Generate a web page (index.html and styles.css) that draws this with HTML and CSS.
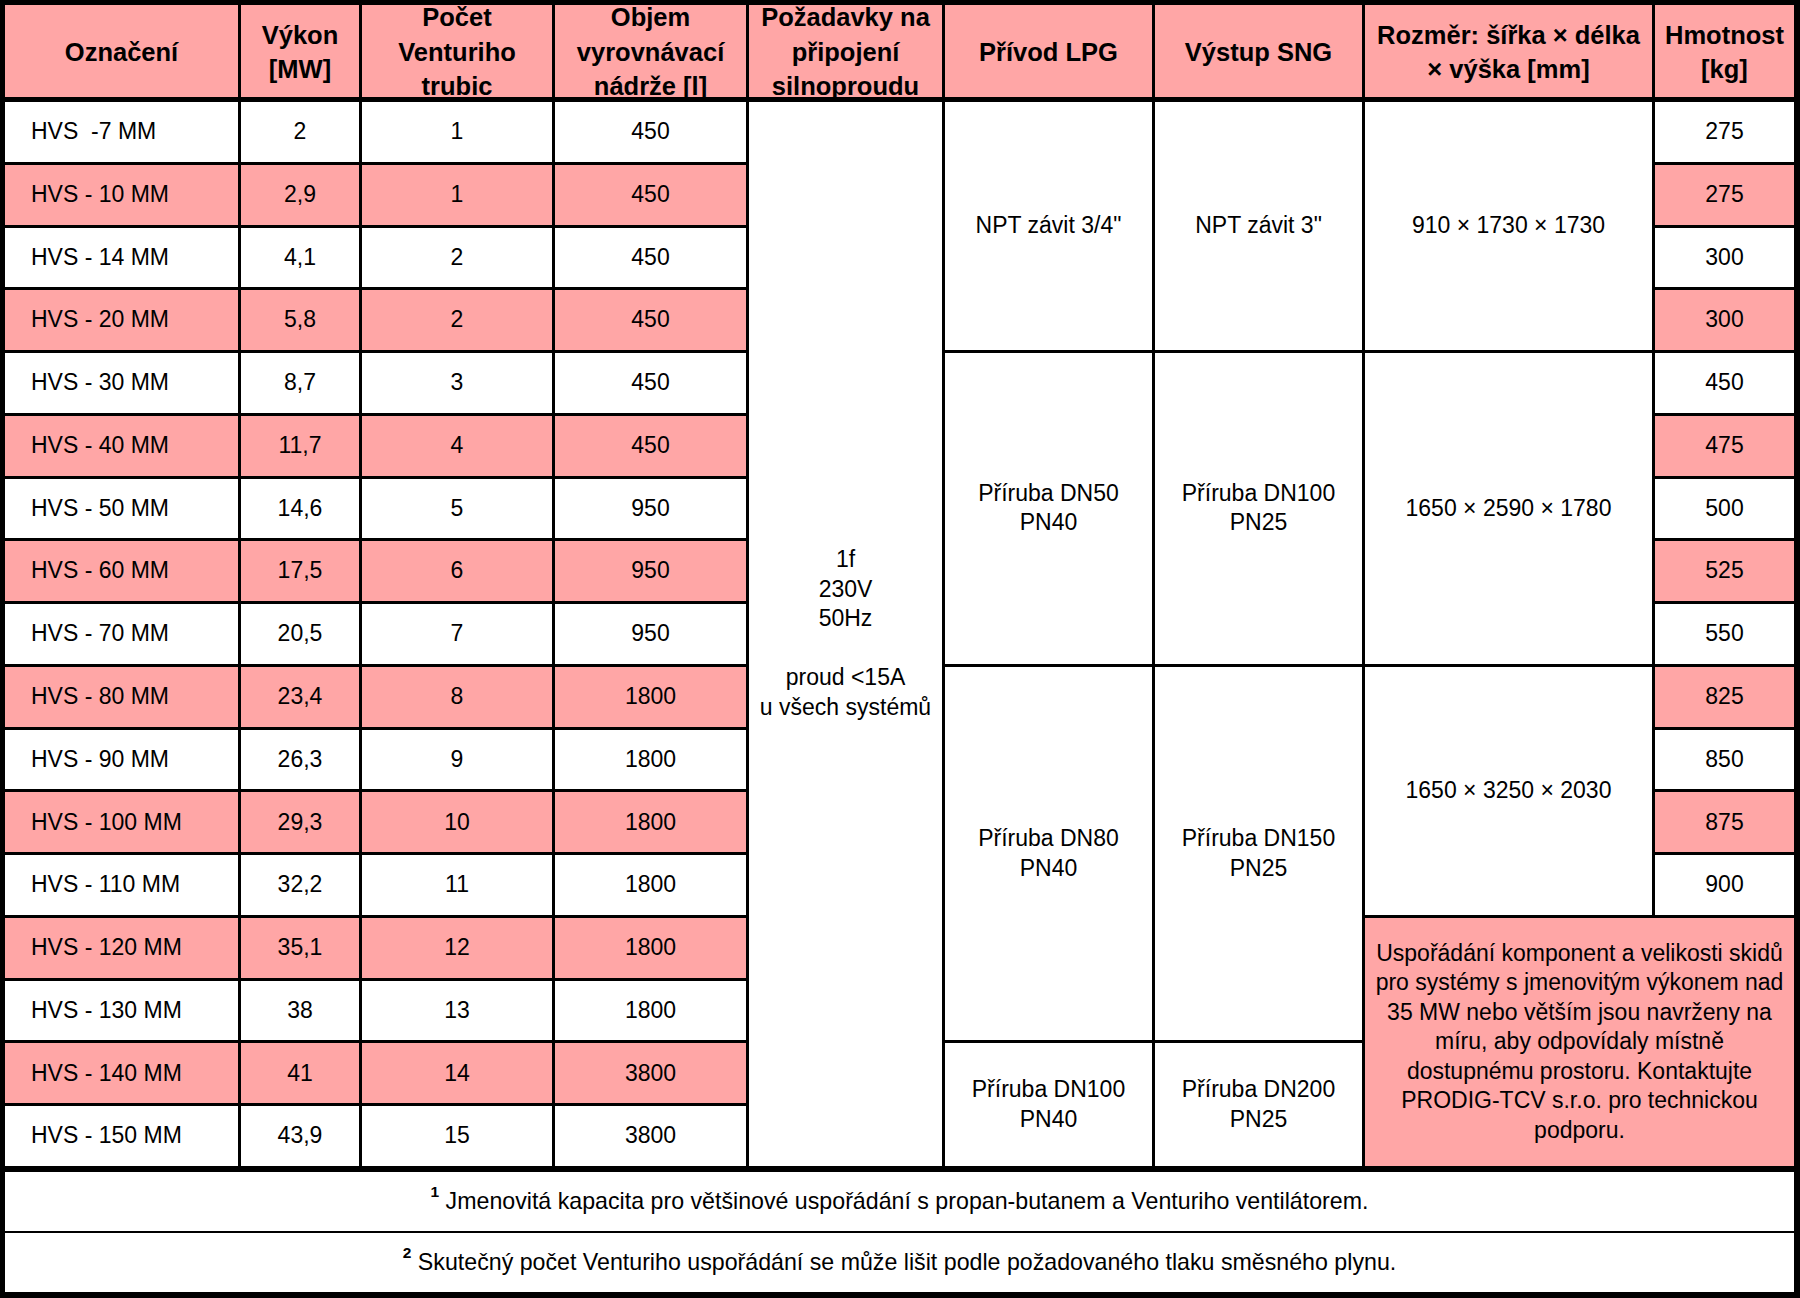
FILE: index.html
```html
<!DOCTYPE html>
<html lang="cs">
<head>
<meta charset="utf-8">
<title>HVS MM</title>
<link rel="stylesheet" href="styles.css">
</head>
<body>
<div class="sheet">
  <div class="grid head">
    <div class="hc">Označení</div>
    <div class="hc">Výkon<br>[MW]</div>
    <div class="hc">Počet<br>Venturiho<br>trubic</div>
    <div class="hc">Objem<br>vyrovnávací<br>nádrže [l]</div>
    <div class="hc">Požadavky na<br>připojení<br>silnoproudu</div>
    <div class="hc">Přívod LPG</div>
    <div class="hc">Výstup SNG</div>
    <div class="hc">Rozměr: šířka × délka<br>× výška [mm]</div>
    <div class="hc">Hmotnost<br>[kg]</div>
  </div>

  <div class="grid body">
    <div class="c w power">1f<br>230V<br>50Hz<br><br>proud &lt;15A<br>u všech systémů</div>
    <div class="c w lpg1">NPT závit 3/4"</div>
    <div class="c w lpg2">Příruba DN50<br>PN40</div>
    <div class="c w lpg3">Příruba DN80<br>PN40</div>
    <div class="c w lpg4">Příruba DN100<br>PN40</div>
    <div class="c w sng1">NPT závit 3"</div>
    <div class="c w sng2">Příruba DN100<br>PN25</div>
    <div class="c w sng3">Příruba DN150<br>PN25</div>
    <div class="c w sng4">Příruba DN200<br>PN25</div>
    <div class="c w dim1">910 × 1730 × 1730</div>
    <div class="c w dim2">1650 × 2590 × 1780</div>
    <div class="c w dim3">1650 × 3250 × 2030</div>
    <div class="c p note">Uspořádání komponent a velikosti skidů<br>pro systémy s jmenovitým výkonem nad<br>35 MW nebo větším jsou navrženy na<br>míru, aby odpovídaly místně<br>dostupnému prostoru. Kontaktujte<br>PRODIG-TCV s.r.o. pro technickou<br>podporu.</div>

    <div class="c w name">HVS&nbsp; -7 MM</div><div class="c w">2</div><div class="c w">1</div><div class="c w">450</div><div class="c w">275</div>
    <div class="c p name">HVS - 10 MM</div><div class="c p">2,9</div><div class="c p">1</div><div class="c p">450</div><div class="c p">275</div>
    <div class="c w name">HVS - 14 MM</div><div class="c w">4,1</div><div class="c w">2</div><div class="c w">450</div><div class="c w">300</div>
    <div class="c p name">HVS - 20 MM</div><div class="c p">5,8</div><div class="c p">2</div><div class="c p">450</div><div class="c p">300</div>
    <div class="c w name">HVS - 30 MM</div><div class="c w">8,7</div><div class="c w">3</div><div class="c w">450</div><div class="c w">450</div>
    <div class="c p name">HVS - 40 MM</div><div class="c p">11,7</div><div class="c p">4</div><div class="c p">450</div><div class="c p">475</div>
    <div class="c w name">HVS - 50 MM</div><div class="c w">14,6</div><div class="c w">5</div><div class="c w">950</div><div class="c w">500</div>
    <div class="c p name">HVS - 60 MM</div><div class="c p">17,5</div><div class="c p">6</div><div class="c p">950</div><div class="c p">525</div>
    <div class="c w name">HVS - 70 MM</div><div class="c w">20,5</div><div class="c w">7</div><div class="c w">950</div><div class="c w">550</div>
    <div class="c p name">HVS - 80 MM</div><div class="c p">23,4</div><div class="c p">8</div><div class="c p">1800</div><div class="c p">825</div>
    <div class="c w name">HVS - 90 MM</div><div class="c w">26,3</div><div class="c w">9</div><div class="c w">1800</div><div class="c w">850</div>
    <div class="c p name">HVS - 100 MM</div><div class="c p">29,3</div><div class="c p">10</div><div class="c p">1800</div><div class="c p">875</div>
    <div class="c w name">HVS - 110 MM</div><div class="c w">32,2</div><div class="c w">11</div><div class="c w">1800</div><div class="c w">900</div>
    <div class="c p name">HVS - 120 MM</div><div class="c p">35,1</div><div class="c p">12</div><div class="c p">1800</div>
    <div class="c w name">HVS - 130 MM</div><div class="c w">38</div><div class="c w">13</div><div class="c w">1800</div>
    <div class="c p name">HVS - 140 MM</div><div class="c p">41</div><div class="c p">14</div><div class="c p">3800</div>
    <div class="c w name">HVS - 150 MM</div><div class="c w">43,9</div><div class="c w">15</div><div class="c w">3800</div>
  </div>

  <div class="foot foot1"><p class="ft"><span class="fn">1</span> Jmenovitá kapacita pro většinové uspořádání s propan-butanem a Venturiho ventilátorem.</p></div>
  <div class="foot foot2"><p class="ft"><span class="fn">2</span> Skutečný počet Venturiho uspořádání se může lišit podle požadovaného tlaku směsného plynu.</p></div>
</div>
</body>
</html>
```

FILE: styles.css
```css
html, body {
  margin: 0;
  padding: 0;
  background: #ffffff;
}

body {
  width: 1800px;
  height: 1298px;
  font-family: "Liberation Sans", Arial, sans-serif;
  color: #000;
}

.sheet {
  box-sizing: border-box;
  width: 1800px;
  height: 1298px;
  background: #000;
  padding: 5px 6px 6px 5px;
  display: flex;
  flex-direction: column;
}

.grid {
  display: grid;
  grid-template-columns: 233px 118px 190px 191px 193px 207px 207px 287px 139px;
  column-gap: 3px;
  row-gap: 3px;
  background: #000;
}

.head {
  height: 92px;
  flex: none;
}

.hc {
  background: #ffa6a6;
  display: flex;
  align-items: center;
  justify-content: center;
  text-align: center;
  font-weight: bold;
  font-size: 25.5px;
  line-height: 34.5px;
  white-space: nowrap;
  overflow: hidden;
  padding-top: 2px;
  box-sizing: border-box;
}

.body {
  margin-top: 5px;
  height: 1064px;
  flex: none;
  grid-template-rows: repeat(17, 1fr);
}

.c {
  display: flex;
  align-items: center;
  justify-content: center;
  text-align: center;
  font-size: 23px;
  line-height: 29.5px;
  white-space: nowrap;
  overflow: hidden;
  min-height: 0;
}

.w { background: #ffffff; }
.p { background: #ffa6a6; }

.name {
  justify-content: flex-start;
  text-align: left;
  padding-left: 26px;
}

.power { grid-column: 5; grid-row: 1 / 18; }

.lpg1 { grid-column: 6; grid-row: 1 / 5; }
.lpg2 { grid-column: 6; grid-row: 5 / 10; }
.lpg3 { grid-column: 6; grid-row: 10 / 16; }
.lpg4 { grid-column: 6; grid-row: 16 / 18; }

.sng1 { grid-column: 7; grid-row: 1 / 5; }
.sng2 { grid-column: 7; grid-row: 5 / 10; }
.sng3 { grid-column: 7; grid-row: 10 / 16; }
.sng4 { grid-column: 7; grid-row: 16 / 18; }

.dim1 { grid-column: 8; grid-row: 1 / 5; }
.dim2 { grid-column: 8; grid-row: 5 / 10; }
.dim3 { grid-column: 8; grid-row: 10 / 14; }

.note { grid-column: 8 / 10; grid-row: 14 / 18; }

.foot {
  background: #ffffff;
  height: 59px;
  flex: none;
  display: flex;
  align-items: center;
  justify-content: center;
  font-size: 23.2px;
  line-height: 29.5px;
  white-space: nowrap;
}

.ft {
  margin: 0;
}

.foot1 { margin-top: 6px; }
.foot2 { margin-top: 2px; }

.fn {
  font-size: 15.5px;
  font-weight: bold;
  line-height: 0;
  vertical-align: 12px;
}
```
